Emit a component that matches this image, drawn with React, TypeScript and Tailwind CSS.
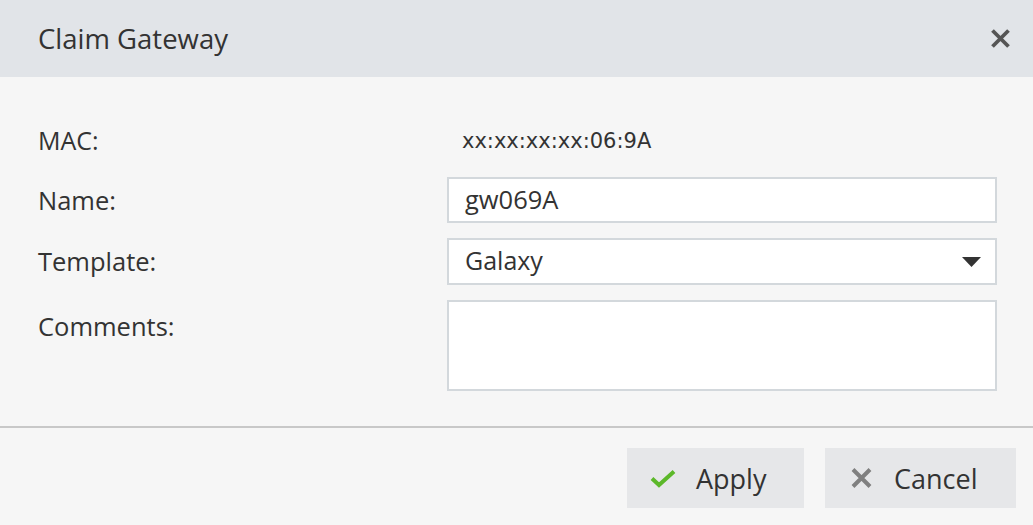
import React from "react";

export default function App() {
  const font = { fontFamily: '"Open Sans", "Liberation Sans", sans-serif' };
  return (
    <div className="w-[1033px] h-[525px] bg-[#f6f6f6] flex flex-col text-[#333333] overflow-hidden" style={font}>
      <div className="h-[77px] bg-[#e1e4e8] flex items-center justify-between pl-[38px] pr-[22px] shrink-0">
        <div className="text-[27.5px] leading-none text-[#333333] mt-[0px]">Claim Gateway</div>
        <svg width="21" height="21" viewBox="0 0 21 21">
          <path d="M2.5 2.5 L18.5 18.5 M18.5 2.5 L2.5 18.5" stroke="#555555" strokeWidth="3.8" strokeLinecap="butt" />
        </svg>
      </div>
      <div className="flex flex-col pl-[38px] pr-[36px] pt-[41px] pb-[35px]">
        <div className="flex items-center h-[46px]">
          <div className="w-[409px] text-[25px] leading-none -mt-[1px]">MAC:</div>
          <div className="pl-[15px] text-[21px] leading-none text-[#333333]" style={{ fontFamily: '"DejaVu Sans", sans-serif' }}>
            xx:xx:xx:xx:06:9A
          </div>
        </div>
        <div className="flex items-center h-[46px] mt-[13px]">
          <div className="w-[409px] text-[25.5px] leading-none pt-[2px]">Name:</div>
          <div className="flex-1 h-[46px] bg-white border-2 border-[#d3d8dc] flex items-center pl-[16px] text-[25.5px] leading-none">
            gw069A
          </div>
        </div>
        <div className="flex items-center h-[47px] mt-[15px]">
          <div className="w-[409px] text-[25.5px] leading-none pt-[1px]">Template:</div>
          <div className="flex-1 h-[47px] bg-white border-2 border-[#d3d8dc] flex items-center justify-between pl-[16px] pr-[14px] text-[25px] leading-none">
            <span className="-mt-[3px]">Galaxy</span>
            <svg width="19" height="10" viewBox="0 0 19 10">
              <path d="M0 0 L19 0 L9.5 10 Z" fill="#333333" />
            </svg>
          </div>
        </div>
        <div className="flex items-start mt-[15px]">
          <div className="w-[409px] text-[25.5px] leading-none pt-[14px]">Comments:</div>
          <div className="flex-1 h-[91px] bg-white border-2 border-[#d3d8dc]"></div>
        </div>
      </div>
      <div className="h-[2px] bg-[#c8c8c8] shrink-0"></div>
      <div className="flex justify-end gap-[21px] pt-[20px] pr-[17px]">
        <div className="w-[177px] h-[60px] bg-[#e6e7e9] flex items-center pl-[23px]">
          <svg width="26" height="19" viewBox="0 0 26 19">
            <path d="M2 9.5 L9 16 L24 2.5" stroke="#5cb82a" strokeWidth="4" fill="none" />
          </svg>
          <span className="ml-[20px] text-[27px] leading-none mt-[0px]">Apply</span>
        </div>
        <div className="w-[191px] h-[60px] bg-[#e6e7e9] flex items-center pl-[26px]">
          <svg width="21" height="20" viewBox="0 0 21 20">
            <path d="M2 1.5 L19 18.5 M19 1.5 L2 18.5" stroke="#808080" strokeWidth="4" />
          </svg>
          <span className="ml-[22px] text-[27px] leading-none mt-[0px]">Cancel</span>
        </div>
      </div>
    </div>
  );
}
